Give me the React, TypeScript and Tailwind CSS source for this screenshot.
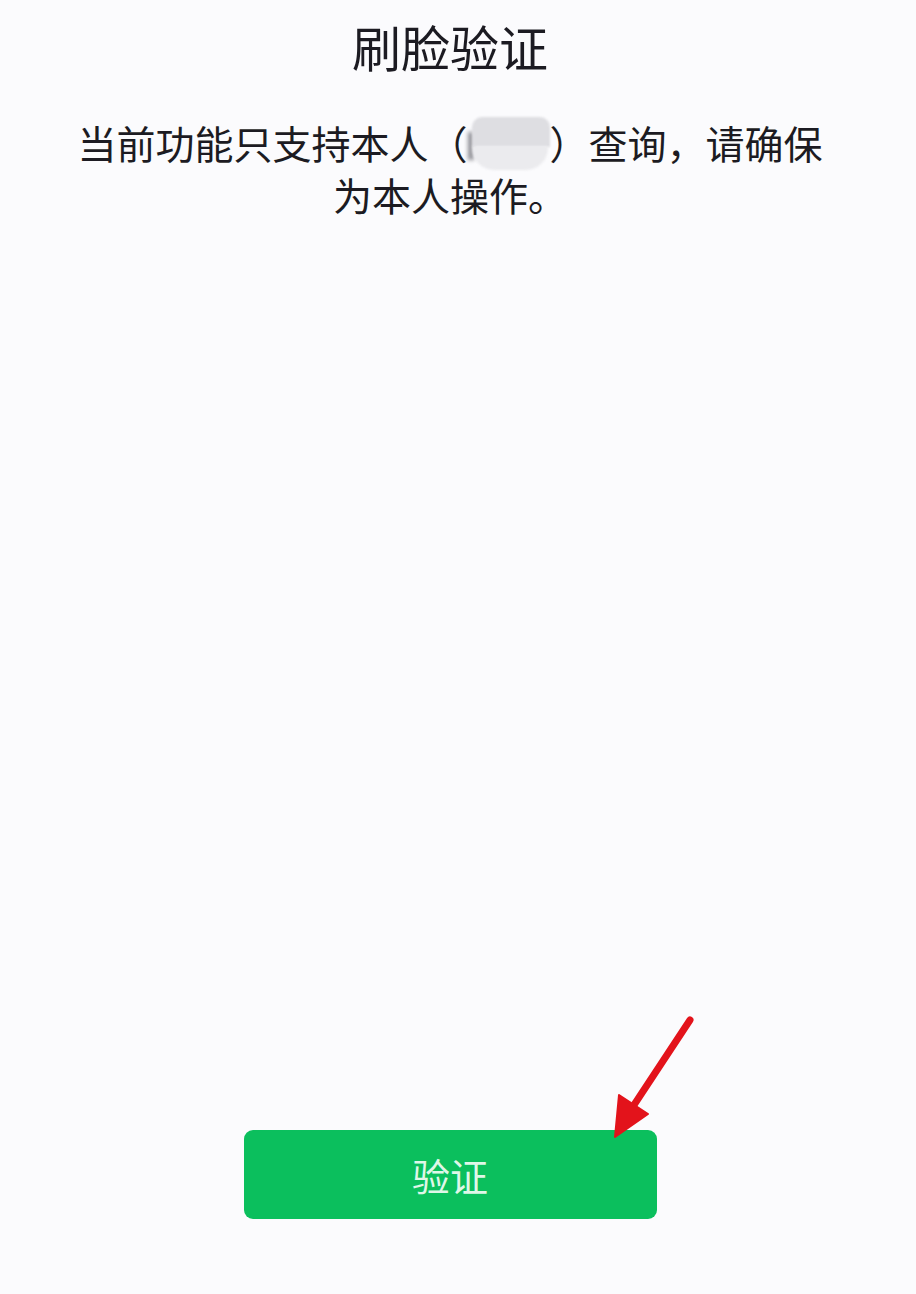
import React from "react";

export default function App() {
  return (
    <div
      className="relative flex h-[1294px] w-[916px] flex-col items-center overflow-hidden bg-[#fbfbfd] pr-[16px] text-[#1c1b22]"
      style={{ fontFamily: '"Noto Sans CJK SC", "Noto Sans", sans-serif' }}
    >
      <h1 className="mt-[18px] text-[49px] font-normal leading-[56px]">刷脸验证</h1>
      <p className="mt-[42px] w-[860px] text-center text-[39px] leading-[52px]">
        当前功能只支持本人（
        <span className="relative inline-block h-[52px] w-[82px] align-top">
          <span className="absolute left-[0px] top-[16px] h-[28px] w-[6px] bg-[#8e8e94] blur-[2px]" />
          <span className="absolute left-[4px] top-[1px] h-[30px] w-[78px] rounded-t-[10px] bg-[#dedee2] blur-[1px]" />
          <span className="absolute left-[4px] top-[30px] h-[24px] w-[76px] rounded-b-[22px] bg-[#ebebee] blur-[1px]" />
        </span>
        ）查询，请确保
        <br />
        为本人操作。
      </p>
      <div className="flex-1" />
      <button className="mb-[75px] flex h-[89px] w-[413px] items-center justify-center rounded-[9px] bg-[#0bbf5d] text-[38px] text-[#dff7e8]">
        验证
      </button>
      <svg
        className="pointer-events-none absolute left-0 top-0"
        width="916"
        height="1294"
        viewBox="0 0 916 1294"
      >
        <line x1="690" y1="1020" x2="632" y2="1108" stroke="#e3131b" strokeWidth="7" strokeLinecap="round" />
        <polygon points="615,1137 619,1095 648,1114" fill="#e3131b" stroke="#e3131b" strokeWidth="2" strokeLinejoin="round" />
      </svg>
    </div>
  );
}
